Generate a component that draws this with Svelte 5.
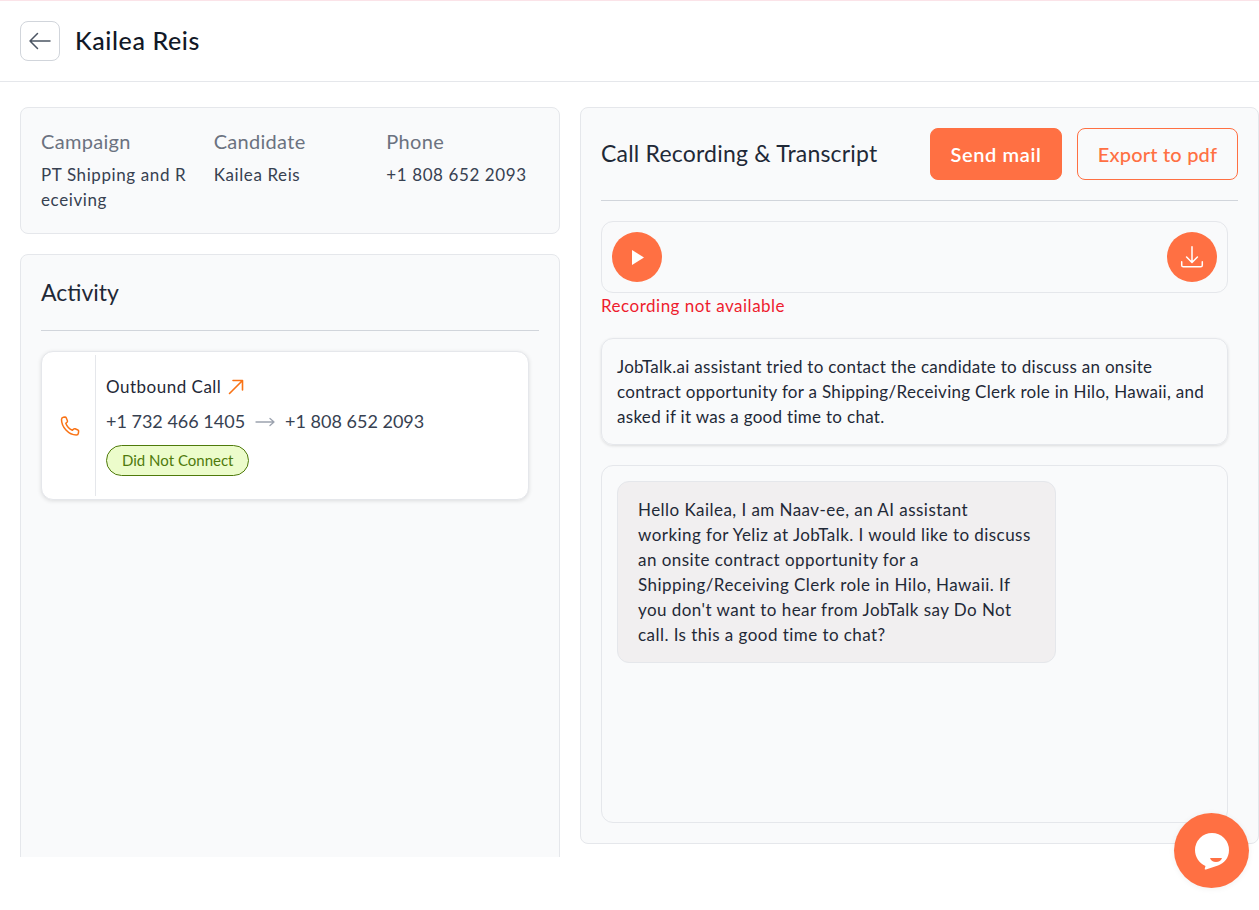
<script>
  const info = [
    { label: 'Campaign', value: 'PT Shipping and Receiving' },
    { label: 'Candidate', value: 'Kailea Reis' },
    { label: 'Phone', value: '+1 808 652 2093' }
  ];
</script>

<div class="page">
  <header class="topbar">
    <button class="back" aria-label="Back">
      <svg width="24" height="24" viewBox="0 0 24 24" fill="none" stroke="#4b5563" stroke-width="1.5" stroke-linecap="round" stroke-linejoin="round">
        <path d="M22 12H2M9.500 4.500 2 12l7.500 7.500" />
      </svg>
    </button>
    <h1>Kailea Reis</h1>
  </header>

  <main class="content">
    <div class="left">
      <section class="card info">
        {#each info as item}
          <div class="info-col">
            <div class="label">{item.label}</div>
            <div class="value">{item.value}</div>
          </div>
        {/each}
      </section>

      <section class="card activity">
        <h2>Activity</h2>
        <hr />
        <div class="call">
          <div class="call-icon">
            <svg width="24" height="24" viewBox="0 0 24 24" fill="none" stroke="#f97316" stroke-width="1.5" stroke-linecap="round" stroke-linejoin="round">
              <path d="M3.500 5.500c0-1 .8-2 1.800-2.200L7 3c.6 0 1 .3 1.200.8l1.200 3c.2.5 0 1-.4 1.400L7.800 9.300c1 2.800 3.500 5.700 6.600 7l1.200-1.200c.4-.4 1-.5 1.500-.3l2.800 1.200c.5.200.8.700.7 1.300l-.2 1.800c-.1 1-1 1.900-2.100 1.900C10.500 21 3.500 13 3.500 5.500Z" />
            </svg>
          </div>
          <div class="call-body">
            <div class="call-title">
              Outbound Call
              <svg width="18" height="18" viewBox="0 0 18 18" fill="none" stroke="#f97316" stroke-width="1.6" stroke-linecap="round" stroke-linejoin="round">
                <path d="M2.500 15.500 15.500 2.500M6 2.500h9.500V12" />
              </svg>
            </div>
            <div class="call-numbers">
              <span>+1 732 466 1405</span>
              <svg width="20" height="10" viewBox="0 0 20 10" fill="none" stroke="#9ca3af" stroke-width="1.3" stroke-linecap="round" stroke-linejoin="round">
                <path d="M1 5h18M15 1.500 19 5l-4 3.500" />
              </svg>
              <span>+1 808 652 2093</span>
            </div>
            <span class="status">Did Not Connect</span>
          </div>
        </div>
      </section>
    </div>

    <section class="card right">
      <div class="right-head">
        <h2>Call Recording &amp; Transcript</h2>
        <div class="actions">
          <button class="btn solid">Send mail</button>
          <button class="btn outline">Export to pdf</button>
        </div>
      </div>
      <hr />
      <div class="player">
        <button class="round" aria-label="Play">
          <svg class="play" width="12" height="15" viewBox="0 0 12 15"><path d="M0 0v15L12 7.500Z" fill="#fff" /></svg>
        </button>
        <button class="round" aria-label="Download">
          <svg width="26" height="26" viewBox="0 0 24 24" fill="none" stroke="#fff" stroke-width="1.400" stroke-linecap="round" stroke-linejoin="round">
            <path d="M12 2.500v14M7 12l5 5 5-5M2.500 16.500v3c0 .8.700 1.500 1.500 1.500h16c.8 0 1.500-.7 1.500-1.500v-3" />
          </svg>
        </button>
      </div>
      <p class="error">Recording not available</p>
      <div class="summary">
        JobTalk.ai assistant tried to contact the candidate to discuss an onsite contract opportunity for a Shipping/Receiving Clerk role in Hilo, Hawaii, and asked if it was a good time to chat.
      </div>
      <div class="transcript">
        <div class="bubble">
          Hello Kailea, I am Naav-ee, an AI assistant working for Yeliz at JobTalk. I would like to discuss an onsite contract opportunity for a Shipping/Receiving Clerk role in Hilo, Hawaii. If you don't want to hear from JobTalk say Do Not call. Is this a good time to chat?
        </div>
      </div>
    </section>
  </main>

  <button class="chat" aria-label="Open chat">
    <svg width="36" height="38" viewBox="0 0 36 38">
      <path d="M18 1a17 17 0 0 1 17 17c0 8-5 13.500-11 15.500L12 37.500c-1 .3-1.500-.2-1.200-1l.7-2.500C5 31 1 25 1 18A17 17 0 0 1 18 1Z" fill="#fff" />
      <path d="M16 26h12c-.8 2.600-3 4-6 4s-5.200-1.400-6-4Z" fill="#ff7043" />
    </svg>
  </button>
</div>

<style>
  :global(body) {
    margin: 0;
    background: #fff;
    font-family: 'Lato', 'Open Sans', sans-serif;
    color: #1f2937;
  }

  .page {
    position: relative;
    height: 910px;
    overflow: hidden;
    box-sizing: border-box;
    border-top: 1px solid #fbe3e8;
  }

  .topbar {
    display: flex;
    align-items: center;
    gap: 15px;
    height: 81px;
    padding: 0 0 1px 20px;
    box-sizing: border-box;
    border-bottom: 1px solid #e5e7eb;
  }

  .back {
    display: flex;
    align-items: center;
    justify-content: center;
    width: 40px;
    height: 40px;
    padding: 0;
    background: #fff;
    border: 1px solid #d1d5db;
    border-radius: 8px;
  }

  h1 {
    margin: -2px 0 0;
    font-size: 25px;
    font-weight: 500;
    color: #111827;
    letter-spacing: 0.6px;
  }

  h2 {
    margin: 0;
    font-size: 23px;
    font-weight: 400;
    color: #1f2937;
    letter-spacing: 0.2px;
  }

  hr {
    margin: 0;
    border: none;
    border-top: 1px solid #d1d5db;
  }

  .content {
    display: grid;
    grid-template-columns: 540px 679px;
    gap: 20px;
    height: 775px;
    padding: 25px 0 0 20px;
    box-sizing: border-box;
    overflow: hidden;
    align-items: start;
  }

  .card {
    background: #f9fafb;
    border: 1px solid #e5e7eb;
    border-radius: 8px;
    box-sizing: border-box;
  }

  .left {
    display: flex;
    flex-direction: column;
    gap: 20px;
  }

  .info {
    display: grid;
    grid-template-columns: repeat(3, 1fr);
    column-gap: 20px;
    height: 127px;
    padding: 19px 20px 20px;
  }

  .label {
    font-size: 20px;
    line-height: 28px;
    color: #6b7280;
    letter-spacing: 0.3px;
  }

  .value {
    margin-top: 7px;
    font-size: 17px;
    line-height: 25px;
    color: #374151;
    word-break: break-all;
    letter-spacing: 0.6px;
  }

  .activity {
    height: 640px;
    padding: 20px;
  }

  .activity h2 {
    height: 37px;
    line-height: 35px;
    margin-bottom: 18px;
    letter-spacing: 0;
  }

  .call {
    display: flex;
    width: 488px;
    height: 149px;
    margin-top: 20px;
    padding: 3px 0;
    box-sizing: border-box;
    background: #fff;
    border: 1px solid #e5e7eb;
    border-radius: 12px;
    box-shadow: 0 1px 4px rgba(0, 0, 0, 0.12);
  }

  .call-icon {
    display: flex;
    align-items: center;
    justify-content: center;
    width: 54px;
    padding-left: 3px;
    box-sizing: border-box;
    border-right: 1px solid #e5e7eb;
  }

  .call-body {
    padding: 19px 10px 0;
  }

  .call-title {
    display: flex;
    align-items: center;
    gap: 6px;
    font-size: 17px;
    line-height: 25px;
    color: #1f2937;
    letter-spacing: 0.5px;
  }

  .call-numbers {
    display: flex;
    align-items: center;
    gap: 10px;
    margin-top: 10px;
    font-size: 18px;
    line-height: 25px;
    color: #374151;
  }

  .status {
    display: inline-block;
    margin-top: 11px;
    padding: 0 15px;
    font-size: 15px;
    line-height: 29px;
    color: #4f7a0b;
    background: #ecfccb;
    border: 1px solid #4f7a0b;
    border-radius: 16px;
  }

  .right {
    height: 737px;
    padding: 20px;
  }

  .right-head {
    display: flex;
    align-items: center;
    justify-content: space-between;
    height: 52px;
    margin-bottom: 20px;
  }

  .right-head h2 {
    margin-top: -2px;
  }

  .actions {
    display: flex;
    gap: 15px;
    margin-top: 0;
  }

  .btn {
    height: 52px;
    padding: 0;
    font-family: inherit;
    font-size: 20px;
    white-space: nowrap;
    border-radius: 8px;
    border: 1px solid #ff7043;
  }

  .solid {
    width: 132px;
    color: #fff;
    background: #ff7043;
    font-weight: 600;
    letter-spacing: 0.6px;
  }

  .outline {
    width: 161px;
    color: #ff7043;
    background: transparent;
    font-weight: 500;
    letter-spacing: 0.2px;
  }

  .player {
    display: flex;
    justify-content: space-between;
    align-items: center;
    margin-top: 20px;
    width: 627px;
    height: 72px;
    padding: 0 10px;
    box-sizing: border-box;
    border: 1px solid #e5e7eb;
    border-radius: 12px;
  }

  .round {
    display: flex;
    align-items: center;
    justify-content: center;
    width: 50px;
    height: 50px;
    padding: 0;
    border: none;
    border-radius: 50%;
    background: #ff7043;
  }

  .play {
    margin-left: 2px;
  }

  .error {
    margin: 0;
    font-size: 17px;
    line-height: 25px;
    color: #ee1c2e;
    letter-spacing: 0.5px;
  }

  .summary {
    width: 627px;
    margin-top: 20px;
    padding: 15px;
    box-sizing: border-box;
    font-size: 17px;
    line-height: 25px;
    color: #1f2937;
    letter-spacing: 0.3px;
    border: 1px solid #e5e7eb;
    border-radius: 12px;
    box-shadow: 0 1px 3px rgba(0, 0, 0, 0.12);
  }

  .transcript {
    width: 627px;
    height: 358px;
    margin-top: 20px;
    padding: 15px;
    box-sizing: border-box;
    border: 1px solid #e5e7eb;
    border-radius: 12px;
  }

  .bubble {
    width: 439px;
    padding: 15px 20px;
    box-sizing: border-box;
    font-size: 17px;
    line-height: 25px;
    color: #1f2937;
    letter-spacing: 0.45px;
    background: #f1eff0;
    border: 1px solid #e5e7eb;
    border-radius: 12px;
  }

  .chat {
    position: absolute;
    left: 1174px;
    top: 812px;
    display: flex;
    align-items: center;
    justify-content: center;
    width: 75px;
    height: 75px;
    padding: 0;
    border: none;
    border-radius: 50%;
    background: #ff7043;
    box-shadow: 0 1px 6px rgba(0, 0, 0, 0.06);
  }
</style>
